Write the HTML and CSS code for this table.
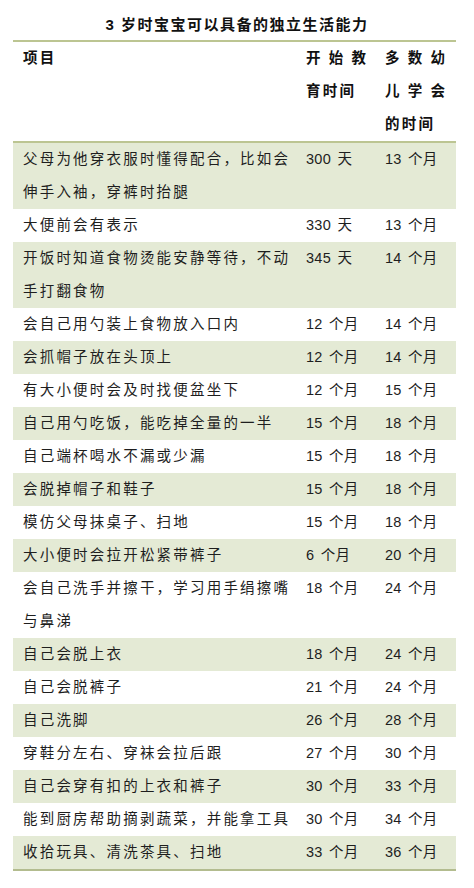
FILE: index.html
```
<!DOCTYPE html>
<html lang="zh">
<head>
<meta charset="utf-8">
<link rel="stylesheet" href="styles.css">
</head>
<body>
<div class="page">
  <h1 class="title">3 岁时宝宝可以具备的独立生活能力</h1>
  <div class="table">
    <div class="row head">
      <div class="c1"><span class="cjk">项目</span></div>
      <div class="c2"><div class="wide">开始教</div><div class="cjk">育时间</div></div>
      <div class="c3"><div class="wide">多数幼</div><div class="wide">儿学会</div><div class="cjk">的时间</div></div>
    </div>
    <div class="row g"><div class="c1">父母为他穿衣服时懂得配合，比如会伸手入袖，穿裤时抬腿</div><div class="c2">300 天</div><div class="c3">13 个月</div></div>
    <div class="row"><div class="c1">大便前会有表示</div><div class="c2">330 天</div><div class="c3">13 个月</div></div>
    <div class="row g"><div class="c1">开饭时知道食物烫能安静等待，不动手打翻食物</div><div class="c2">345 天</div><div class="c3">14 个月</div></div>
    <div class="row"><div class="c1">会自己用勺装上食物放入口内</div><div class="c2">12 个月</div><div class="c3">14 个月</div></div>
    <div class="row g"><div class="c1">会抓帽子放在头顶上</div><div class="c2">12 个月</div><div class="c3">14 个月</div></div>
    <div class="row"><div class="c1">有大小便时会及时找便盆坐下</div><div class="c2">12 个月</div><div class="c3">15 个月</div></div>
    <div class="row g"><div class="c1">自己用勺吃饭，能吃掉全量的一半</div><div class="c2">15 个月</div><div class="c3">18 个月</div></div>
    <div class="row"><div class="c1">自己端杯喝水不漏或少漏</div><div class="c2">15 个月</div><div class="c3">18 个月</div></div>
    <div class="row g"><div class="c1">会脱掉帽子和鞋子</div><div class="c2">15 个月</div><div class="c3">18 个月</div></div>
    <div class="row"><div class="c1">模仿父母抹桌子、扫地</div><div class="c2">15 个月</div><div class="c3">18 个月</div></div>
    <div class="row g"><div class="c1">大小便时会拉开松紧带裤子</div><div class="c2">6 个月</div><div class="c3">20 个月</div></div>
    <div class="row"><div class="c1">会自己洗手并擦干，学习用手绢擦嘴与鼻涕</div><div class="c2">18 个月</div><div class="c3">24 个月</div></div>
    <div class="row g"><div class="c1">自己会脱上衣</div><div class="c2">18 个月</div><div class="c3">24 个月</div></div>
    <div class="row"><div class="c1">自己会脱裤子</div><div class="c2">21 个月</div><div class="c3">24 个月</div></div>
    <div class="row g"><div class="c1">自己洗脚</div><div class="c2">26 个月</div><div class="c3">28 个月</div></div>
    <div class="row"><div class="c1">穿鞋分左右、穿袜会拉后跟</div><div class="c2">27 个月</div><div class="c3">30 个月</div></div>
    <div class="row g"><div class="c1">自己会穿有扣的上衣和裤子</div><div class="c2">30 个月</div><div class="c3">33 个月</div></div>
    <div class="row"><div class="c1">能到厨房帮助摘剥蔬菜，并能拿工具</div><div class="c2">30 个月</div><div class="c3">34 个月</div></div>
    <div class="row g last"><div class="c1">收拾玩具、清洗茶具、扫地</div><div class="c2">33 个月</div><div class="c3">36 个月</div></div>
  </div>
</div>
</body>
</html>
```
FILE: styles.css
```
html, body {
  margin: 0;
  padding: 0;
  background: #ffffff;
}

.page {
  width: 474px;
  font-family: "Liberation Sans", "Noto Sans CJK SC", sans-serif;
  color: #1e1e1e;
  font-size: 14.5px;
}

.title {
  margin: 0;
  padding-top: 14px;
  height: 26px;
  line-height: 22px;
  font-size: 15px;
  font-weight: bold;
  letter-spacing: 1.5px;
  text-align: center;
  color: #111;
}

.table {
  margin-left: 13px;
  width: 443px;
  border-top: 2px solid #bcc592;
  border-bottom: 2px solid #b3bc8f;
}

.row {
  display: grid;
  grid-template-columns: 285px 79px 79px;
  line-height: 33px;
}

.row.g {
  background: #e4ead5;
}

.row.head {
  font-weight: bold;
  border-bottom: 2px solid #bcc592;
  color: #111;
}

.c1 {
  padding-left: 10px;
  padding-right: 4px;
  letter-spacing: 2.2px;
}

.c2, .c3 {
  padding-left: 8px;
  white-space: nowrap;
  word-spacing: 2px;
  letter-spacing: 0.3px;
}

.wide {
  letter-spacing: 8.3px;
}

.cjk {
  letter-spacing: 2.2px;
}
```
